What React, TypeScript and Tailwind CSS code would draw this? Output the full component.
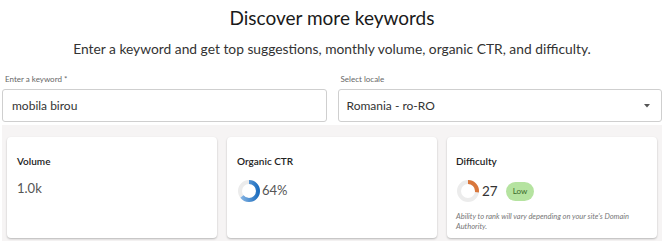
import React from 'react';

const Donut: React.FC<{ value: number; color: string; id: string; color2?: string }> = ({ value, color, id, color2 }) => {
  const r = 9;
  const c = 2 * Math.PI * r;
  return (
    <svg width="24" height="24" viewBox="0 0 24 24" className="shrink-0">
      <defs>
        <linearGradient id={id} x1="0" y1="0" x2="0" y2="1">
          <stop offset="0%" stopColor={color2 ?? color} />
          <stop offset="100%" stopColor={color} />
        </linearGradient>
      </defs>
      <circle cx="12" cy="12" r={r} fill="none" stroke="#ececec" strokeWidth="4" />
      <circle
        cx="12"
        cy="12"
        r={r}
        fill="none"
        stroke={`url(#${id})`}
        strokeWidth="4"
        strokeDasharray={`${(value / 100) * c} ${c}`}
        transform="rotate(-90 12 12)"
      />
    </svg>
  );
};

const App: React.FC = () => {
  return (
    <div className="w-[664px] h-[249px] bg-white font-['Lato','Noto_Sans',sans-serif] text-[#222]">
      <div className="text-center pt-[6px]">
        <h1 className="text-[19px] leading-[24px] text-[#1a1a1a]">Discover more keywords</h1>
        <p className="mt-[9px] text-[13.8px] leading-[20px] text-[#333]">
          Enter a keyword and get top suggestions, monthly volume, organic CTR, and difficulty.
        </p>
      </div>

      <div className="flex gap-[11px] px-[2px] mt-[15px]">
        <div className="flex-1">
          <label className="block text-[8px] leading-[10px] text-[#666] pl-[3px] mb-[5px]">Enter a keyword *</label>
          <div className="h-[33px] border border-[#cfcfcf] rounded-[3px] flex items-center px-[9px] text-[12px] text-[#333]">
            mobila birou
          </div>
        </div>
        <div className="flex-1">
          <label className="block text-[8px] leading-[10px] text-[#666] pl-[3px] mb-[5px]">Select locale</label>
          <div className="h-[33px] border border-[#cfcfcf] rounded-[3px] flex items-center justify-between pl-[8px] pr-[11px] text-[12px] text-[#333]">
            <span>Romania - ro-RO</span>
            <svg width="6" height="4" viewBox="0 0 6 4">
              <path d="M0 0 L6 0 L3 3.5 Z" fill="#555" />
            </svg>
          </div>
        </div>
      </div>

      <div className="mx-[2px] mt-[3px] bg-[#f6f4f4] px-[5px] pt-[12px] pb-[3px] grid grid-cols-3 gap-[10px]">
        <div className="bg-white rounded-[4px] shadow-[0_1px_2px_rgba(0,0,0,0.25)] h-[101px] px-[10px] pt-[18px]">
          <div className="text-[10px] leading-[12px] font-semibold text-[#222]">Volume</div>
          <div className="mt-[13px] text-[13px] leading-[16px] text-[#555]">1.0k</div>
        </div>
        <div className="bg-white rounded-[4px] shadow-[0_1px_2px_rgba(0,0,0,0.25)] h-[101px] px-[10px] pt-[18px]">
          <div className="text-[10px] leading-[12px] font-semibold text-[#222]">Organic CTR</div>
          <div className="mt-[12px] flex items-center gap-[1px]">
            <Donut value={64} color="#1f6fc0" color2="#8ab8e6" id="g1" />
            <span className="text-[13px] text-[#555]">64%</span>
          </div>
        </div>
        <div className="bg-white rounded-[4px] shadow-[0_1px_2px_rgba(0,0,0,0.25)] h-[101px] px-[9px] pt-[18px]">
          <div className="text-[10px] leading-[12px] font-semibold text-[#222]">Difficulty</div>
          <div className="mt-[12px] flex items-center">
            <Donut value={27} color="#d9773c" id="g2" />
            <span className="ml-[2px] text-[13.5px] text-[#333]">27</span>
            <span className="ml-[8px] bg-[#b5e3a0] text-[#3c6b2a] rounded-full px-[7px] h-[19px] flex items-center text-[8px]">Low</span>
          </div>
          <p className="mt-[9px] text-[7.5px] leading-[10px] italic text-[#777]">
            Ability to rank will vary depending on your site's Domain Authority.
          </p>
        </div>
      </div>
    </div>
  );
};

export default App;
